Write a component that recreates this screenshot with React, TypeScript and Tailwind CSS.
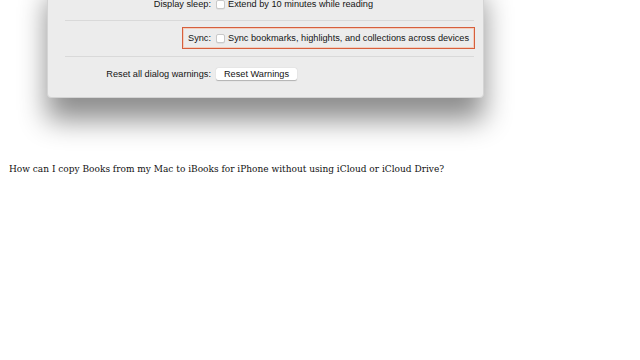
import React from "react";

const sans = { fontFamily: '"Liberation Sans", Arial, sans-serif' };

function Check() {
  return <div className="w-[9px] h-[9px] shrink-0 rounded-[2px] bg-white border border-[#c9c9c9] shadow-[0_0.5px_0.5px_rgba(0,0,0,0.1)]" />;
}

export default function App() {
  return (
    <div className="w-[640px] h-[360px] overflow-hidden bg-white relative">
      <div
        className="ml-[47px] -mt-[24px] w-[437px] h-[122px] bg-[#ececec] rounded-b-[4px] border border-[#d4d4d4] shadow-[0_22px_28px_rgba(0,0,0,0.45)] flex flex-col text-[9.2px] leading-[11px] text-[#141414]"
        style={sans}
      >
        <div className="h-[43px] flex items-end pb-[10px]">
          <div className="w-[163px] text-right">Display sleep:</div>
          <div className="ml-[5px] flex items-center gap-[3px]">
            <Check />
            <span>Extend by 10 minutes while reading</span>
          </div>
        </div>
        <div className="h-px bg-[#d9d9d9] ml-[17px] mr-[9px]" />
        <div className="h-[35px] flex items-center relative">
          <div className="absolute left-[134px] top-[6px] w-[293px] h-[22px] border border-[#d65f3c] shadow-[inset_0_0_0_1px_#f3cdbd]" />
          <div className="w-[163px] text-right relative">Sync:</div>
          <div className="ml-[5px] flex items-center gap-[3px] relative">
            <Check />
            <span>Sync bookmarks, highlights, and collections across devices</span>
          </div>
        </div>
        <div className="h-px bg-[#d9d9d9] ml-[17px] mr-[9px]" />
        <div className="flex items-start pt-[11px]">
          <div className="w-[163px] text-right leading-[12px]">Reset all dialog warnings:</div>
          <div className="ml-[5px] w-[81px] h-[12px] bg-white rounded-[2px] shadow-[0_0.5px_1px_rgba(0,0,0,0.25)] flex items-center justify-center leading-[12px]">
            Reset Warnings
          </div>
        </div>
      </div>
      <div
        className="mt-[65px] pl-[9px] text-[9px] leading-[12px] text-[#111]"
        style={{ fontFamily: '"DejaVu Serif", serif' }}
      >
        How can I copy Books from my Mac to iBooks for iPhone without using iCloud or iCloud Drive?
      </div>
    </div>
  );
}
